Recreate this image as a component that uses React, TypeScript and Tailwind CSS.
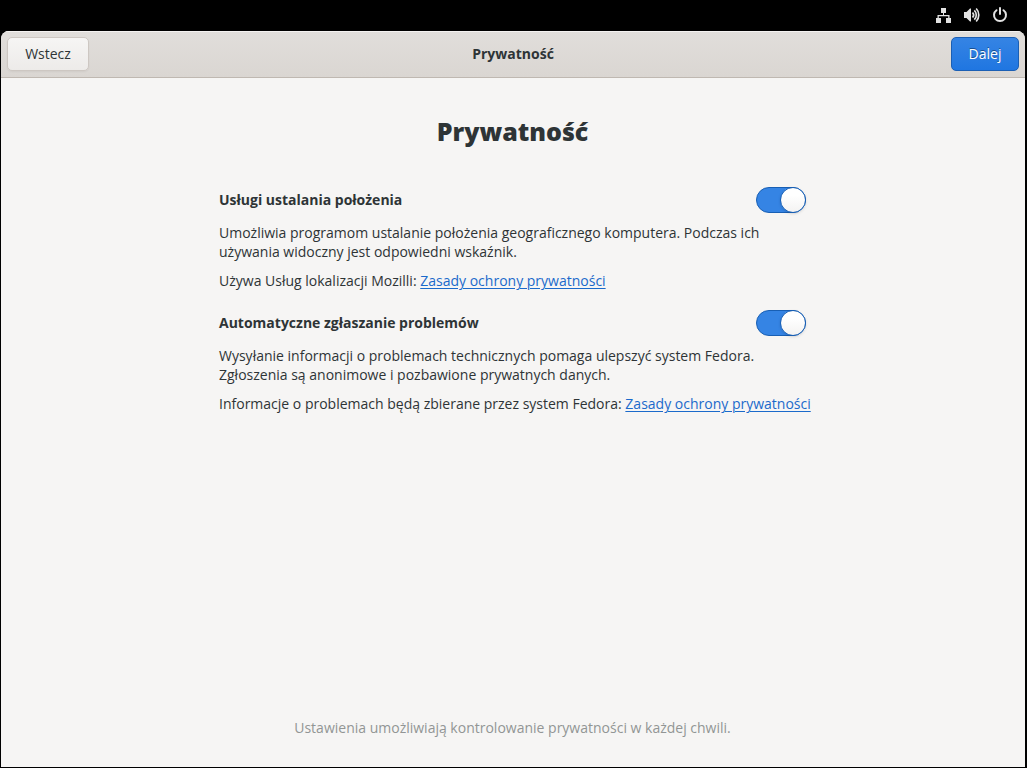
import { useState, type ReactNode } from "react";

function NetworkIcon() {
  return (
    <svg width="16" height="16" viewBox="0 0 16 16" fill="currentColor" aria-hidden="true">
      <path d="M5 1h5v5H8v2h5.500v3H15v5h-5v-5h2.200V9.300H2.800V11H5v5H0v-5h1.500V8H7V6H5z" />
    </svg>
  );
}

function VolumeIcon() {
  return (
    <svg width="16" height="16" viewBox="0 0 16 16" fill="currentColor" aria-hidden="true">
      <path d="M0 5h2.500L6 1.500h1v13H6L2.500 11H0z" />
      <path
        d="M8.500 5.500a3.600 3.600 0 0 1 0 5M10.300 3.300a6.500 6.500 0 0 1 0 9.400M12.200 1.500a9.500 9.500 0 0 1 0 13"
        fill="none"
        stroke="currentColor"
        strokeWidth="1.700"
      />
    </svg>
  );
}

function PowerIcon() {
  return (
    <svg
      width="16"
      height="16"
      viewBox="0 0 16 16"
      fill="none"
      stroke="currentColor"
      strokeWidth="2"
      strokeLinecap="round"
      aria-hidden="true"
    >
      <path d="M8 1v6M4.500 3.200a6 6 0 1 0 7 0" />
    </svg>
  );
}

interface SettingProps {
  id: string;
  title: string;
  note: string;
  children: ReactNode;
}

function Setting({ id, title, note, children }: SettingProps) {
  const [enabled, setEnabled] = useState(true);
  return (
    <section className="flex flex-col">
      <div className="flex items-start justify-between">
        <label htmlFor={id} className="leading-[26px] font-bold">
          {title}
        </label>
        <input
          id={id}
          type="checkbox"
          role="switch"
          checked={enabled}
          onChange={(event) => setEnabled(event.target.checked)}
          className="flex h-[26px] w-[50px] shrink-0 appearance-none items-center rounded-full border border-[#cdc7c2] bg-[#deddda] before:-mx-px before:size-[26px] before:rounded-full before:border before:border-[#cdc7c2] before:bg-linear-to-b before:from-white before:from-30% before:to-[#f4f3f2] before:shadow-sm before:content-[''] checked:justify-end checked:border-[#185fb4] checked:bg-[#3584e4] checked:before:border-[#185fb4]"
        />
      </div>
      <p className="mt-[10px]">{children}</p>
      <p className="mt-[10px] sm:whitespace-nowrap">
        {note}{" "}
        <a href="#privacy" className="text-[#1b6acb] underline decoration-1 underline-offset-2">
          Zasady ochrony prywatności
        </a>
      </p>
    </section>
  );
}

export default function App() {
  return (
    <div className="flex min-h-screen flex-col bg-black pr-[2px] pb-px pl-px font-['Open_Sans','Noto_Sans',sans-serif] text-sm leading-[19px] text-[#2e3436]">
      <div className="flex h-[31px] items-start justify-end gap-3 pt-[7px] pr-[17px] text-[#e2e2e2]">
        <NetworkIcon />
        <VolumeIcon />
        <PowerIcon />
      </div>
      <div className="flex flex-1 flex-col overflow-hidden rounded-t-lg bg-[#f6f5f4]">
        <header className="grid h-[47px] grid-cols-[1fr_auto_1fr] items-center border-b border-[#bfb8b1] bg-linear-to-b from-[#e1dedb] to-[#dad6d2] px-[6px] shadow-[inset_0_1px_#f4f2f1]">
          <button
            type="button"
            className="h-[34px] w-[82px] justify-self-start rounded-[5px] border border-[#cdc7c2] bg-linear-to-b from-[#f6f5f4] to-[#edebe9] pb-0.5 shadow-xs"
          >
            Wstecz
          </button>
          <h1 className="pb-0.5 font-bold">Prywatność</h1>
          <button
            type="button"
            className="h-[34px] w-[68px] justify-self-end rounded-[5px] border border-[#1b5fb4] bg-linear-to-b from-[#3584e4] to-[#1f76e1] pb-0.5 text-white text-shadow-[0_-1px_#174f8f]"
          >
            Dalej
          </button>
        </header>
        <main className="flex flex-1 flex-col items-center pt-[35px] pr-px pb-[30px]">
          <h2 className="text-[25px] leading-9 font-extrabold">Prywatność</h2>
          <div className="mt-[38px] flex w-[587px] max-w-full flex-col gap-5">
            <Setting
              id="location"
              title="Usługi ustalania położenia"
              note="Używa Usług lokalizacji Mozilli:"
            >
              Umożliwia programom ustalanie położenia geograficznego komputera. Podczas ich
              <br />
              używania widoczny jest odpowiedni wskaźnik.
            </Setting>
            <Setting
              id="reporting"
              title="Automatyczne zgłaszanie problemów"
              note="Informacje o problemach będą zbierane przez system Fedora:"
            >
              Wysyłanie informacji o problemach technicznych pomaga ulepszyć system Fedora.
              <br />
              Zgłoszenia są anonimowe i pozbawione prywatnych danych.
            </Setting>
          </div>
          <p className="mt-auto text-[#929595]">
            Ustawienia umożliwiają kontrolowanie prywatności w każdej chwili.
          </p>
        </main>
      </div>
    </div>
  );
}
